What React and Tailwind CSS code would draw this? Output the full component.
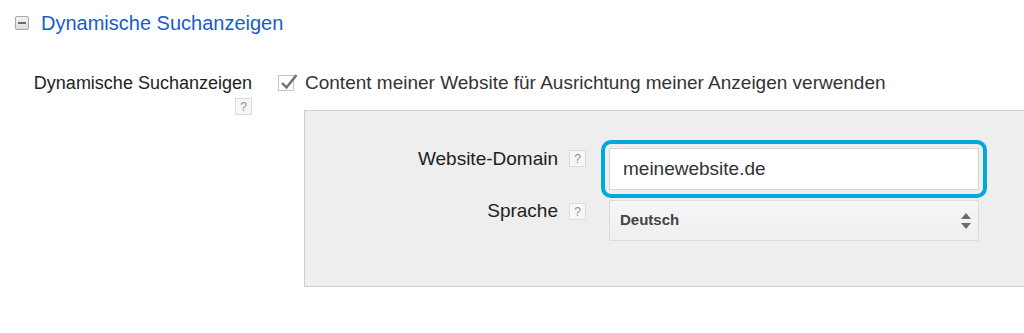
import React from 'react';

const HelpIcon = ({ className = "" }) => (
  <span
    className={`flex h-[17px] w-[17px] items-center justify-center border border-[#dcdcdc] bg-[#f7f7f7] text-[12px] leading-none text-[#8f8f8f] ${className}`}
  >
    ?
  </span>
);

const CollapseIcon = () => (
  <span className="flex h-[14px] w-[14px] items-center justify-center rounded-[2px] border border-[#a8a8a8] bg-gradient-to-b from-[#f4f4f4] to-[#dedede]">
    <span className="h-[2px] w-[8px] bg-[#6b6b6b]" />
  </span>
);

const Checkbox = () => (
  <span className="relative block h-[16px] w-[16px] border border-[#c4c4c4] bg-white">
    <svg viewBox="0 0 18 18" className="absolute left-[1px] top-[-3px] h-[18px] w-[18px]">
      <path d="M2 10 L6.5 14.5 L16.5 2" fill="none" stroke="#6e6e6e" strokeWidth="2.4" />
    </svg>
  </span>
);

export default function App() {
  return (
    <div className="h-[333px] w-[1024px] overflow-hidden bg-white font-['Liberation_Sans',Arial,sans-serif]">
      {/* Section header */}
      <div className="mt-[11px] flex h-[24px] items-center gap-[12px] pl-[15px]">
        <CollapseIcon />
        <span className="text-[20px] leading-[24px] text-[#1a5ccc]">Dynamische Suchanzeigen</span>
      </div>

      {/* Setting row */}
      <div className="mt-[37px] flex items-start">
        <div className="flex w-[252px] flex-col items-end">
          <span className="text-[18px] leading-[22px] text-[#222]">Dynamische Suchanzeigen</span>
          <HelpIcon className="mt-[4px]" />
        </div>

        <div className="ml-[26px] flex flex-1 flex-col">
          <div className="flex items-start gap-[11px]">
            <div className="mt-[3px]">
              <Checkbox />
            </div>
            <span className="text-[19px] leading-[22px] text-[#333]">
              Content meiner Website für Ausrichtung meiner Anzeigen verwenden
            </span>
          </div>

          <div className="ml-[26px] mt-[16px] h-[177px] border-y border-l border-[#cfcfcf] bg-[#eeeeee] pt-[37px]">
            <div className="grid grid-cols-[253px_17px_382px] items-start gap-x-[11px] gap-y-[10px]">
              <span className="text-right text-[19px] leading-[22px] text-[#222]">Website-Domain</span>
              <HelpIcon className="mt-[2px]" />
              <div className="ml-[12px] rounded-[2px] outline-4 outline-offset-4 outline-solid outline-[#00a9d8]">
                <div className="flex h-[42px] items-center border border-[#d6d6d6] bg-white pl-[13px] text-[19px] text-[#333]">
                  meinewebsite.de
                </div>
              </div>

              <span className="text-right text-[19px] leading-[22px] text-[#222]">Sprache</span>
              <HelpIcon className="mt-[3px]" />
              <div className="ml-[12px] flex h-[41px] items-center justify-between rounded-[2px] border border-[#dcdcdc] bg-gradient-to-b from-[#f6f6f6] to-[#efefef] pl-[10px] pr-[7px]">
                <span className="text-[15px] font-bold text-[#444]">Deutsch</span>
                <svg viewBox="0 0 10 18" className="h-[18px] w-[10px]">
                  <path d="M5 1 L10 7 L0 7 Z" fill="#6b6b6b" />
                  <path d="M5 17 L10 11 L0 11 Z" fill="#6b6b6b" />
                </svg>
              </div>
            </div>
          </div>
        </div>
      </div>
    </div>
  );
}
